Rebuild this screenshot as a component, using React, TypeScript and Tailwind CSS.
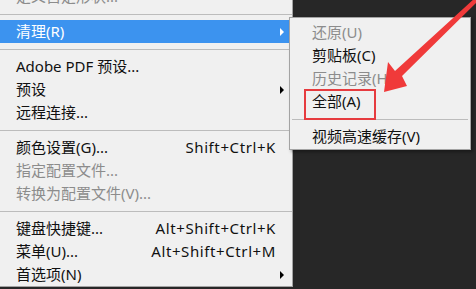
import React from 'react';

const font = { fontFamily: '"Noto Sans", "Noto Sans CJK SC", sans-serif' };

type Item =
  | { sep: true }
  | { label: string; shortcut?: string; sub?: boolean; disabled?: boolean; active?: boolean };

const mainItems: Item[] = [
  { label: '定义自定形状...', disabled: true },
  { sep: true },
  { label: '清理(R)', sub: true, active: true },
  { sep: true },
  { label: 'Adobe PDF 预设...' },
  { label: '预设', sub: true },
  { label: '远程连接...' },
  { sep: true },
  { label: '颜色设置(G)...', shortcut: 'Shift+Ctrl+K' },
  { label: '指定配置文件...', disabled: true },
  { label: '转换为配置文件(V)...', disabled: true },
  { sep: true },
  { label: '键盘快捷键...', shortcut: 'Alt+Shift+Ctrl+K' },
  { label: '菜单(U)...', shortcut: 'Alt+Shift+Ctrl+M' },
  { label: '首选项(N)', sub: true },
];

const subItems: Item[] = [
  { label: '还原(U)', disabled: true },
  { label: '剪贴板(C)' },
  { label: '历史记录(H)', disabled: true },
  { label: '全部(A)' },
  { sep: true },
  { label: '视频高速缓存(V)' },
];

function Arrow({ white }: { white?: boolean }) {
  return (
    <svg width="4" height="8" viewBox="0 0 4 8" className="ml-auto mr-[-9px] shrink-0">
      <path d="M0 0 L4 4 L0 8 Z" fill={white ? '#ffffff' : '#000000'} />
    </svg>
  );
}

export default function App() {
  return (
    <div className="relative w-[476px] h-[289px] overflow-hidden bg-[#272727] text-[15px]" style={font}>
      {/* main menu */}
      <div className="w-[293px] mt-[-15px] bg-[#f0f0f0] border-r border-b border-[#a3a3a3]">
        {mainItems.map((it, i) =>
          'sep' in it ? (
            <div key={i} className="h-[12px] flex items-center">
              <div className="w-full h-px bg-[#bcbcbc]" />
            </div>
          ) : (
            <div
              key={i}
              className={
                'h-[23px] flex items-center pl-4 pr-[17px] whitespace-nowrap ' +
                (it.active ? 'bg-[#3c93ef] text-white' : it.disabled ? 'text-[#8c8c8c]' : 'text-[#111111]')
              }
            >
              <span>{it.label}</span>
              {it.shortcut && <span className="ml-auto tracking-[0.6px] mr-[-1px]">{it.shortcut}</span>}
              {it.sub && <Arrow white={it.active} />}
            </div>
          )
        )}
      </div>

      {/* submenu */}
      <div className="absolute left-[289px] top-[17px] w-[182px] bg-[#f0f0f0] border border-[#a3a3a3] pt-[3px] pb-px shadow-[2px_2px_3px_rgba(0,0,0,0.35)]">
        {subItems.map((it, i) =>
          'sep' in it ? (
            <div key={i} className="h-[12px] flex items-center px-[2px]">
              <div className="w-full h-px bg-[#bcbcbc]" />
            </div>
          ) : (
            <div
              key={i}
              className={
                'h-[23px] flex items-center pl-[22px] whitespace-nowrap ' +
                (it.disabled ? 'text-[#8c8c8c]' : 'text-[#111111]')
              }
            >
              {it.label}
            </div>
          )
        )}
      </div>

      {/* annotation box */}
      <div className="absolute left-[304px] top-[89px] w-[72px] h-[31px] border-2 border-[#e63b3f]" />

      {/* annotation arrow */}
      <svg className="absolute left-0 top-0" width="476" height="289" viewBox="0 0 476 289">
        <path d="M475 -2 L478 1 L402 76 L407 86 L384 92 L388 62 L395 71 Z" fill="#f03a3a" />
      </svg>
    </div>
  );
}
